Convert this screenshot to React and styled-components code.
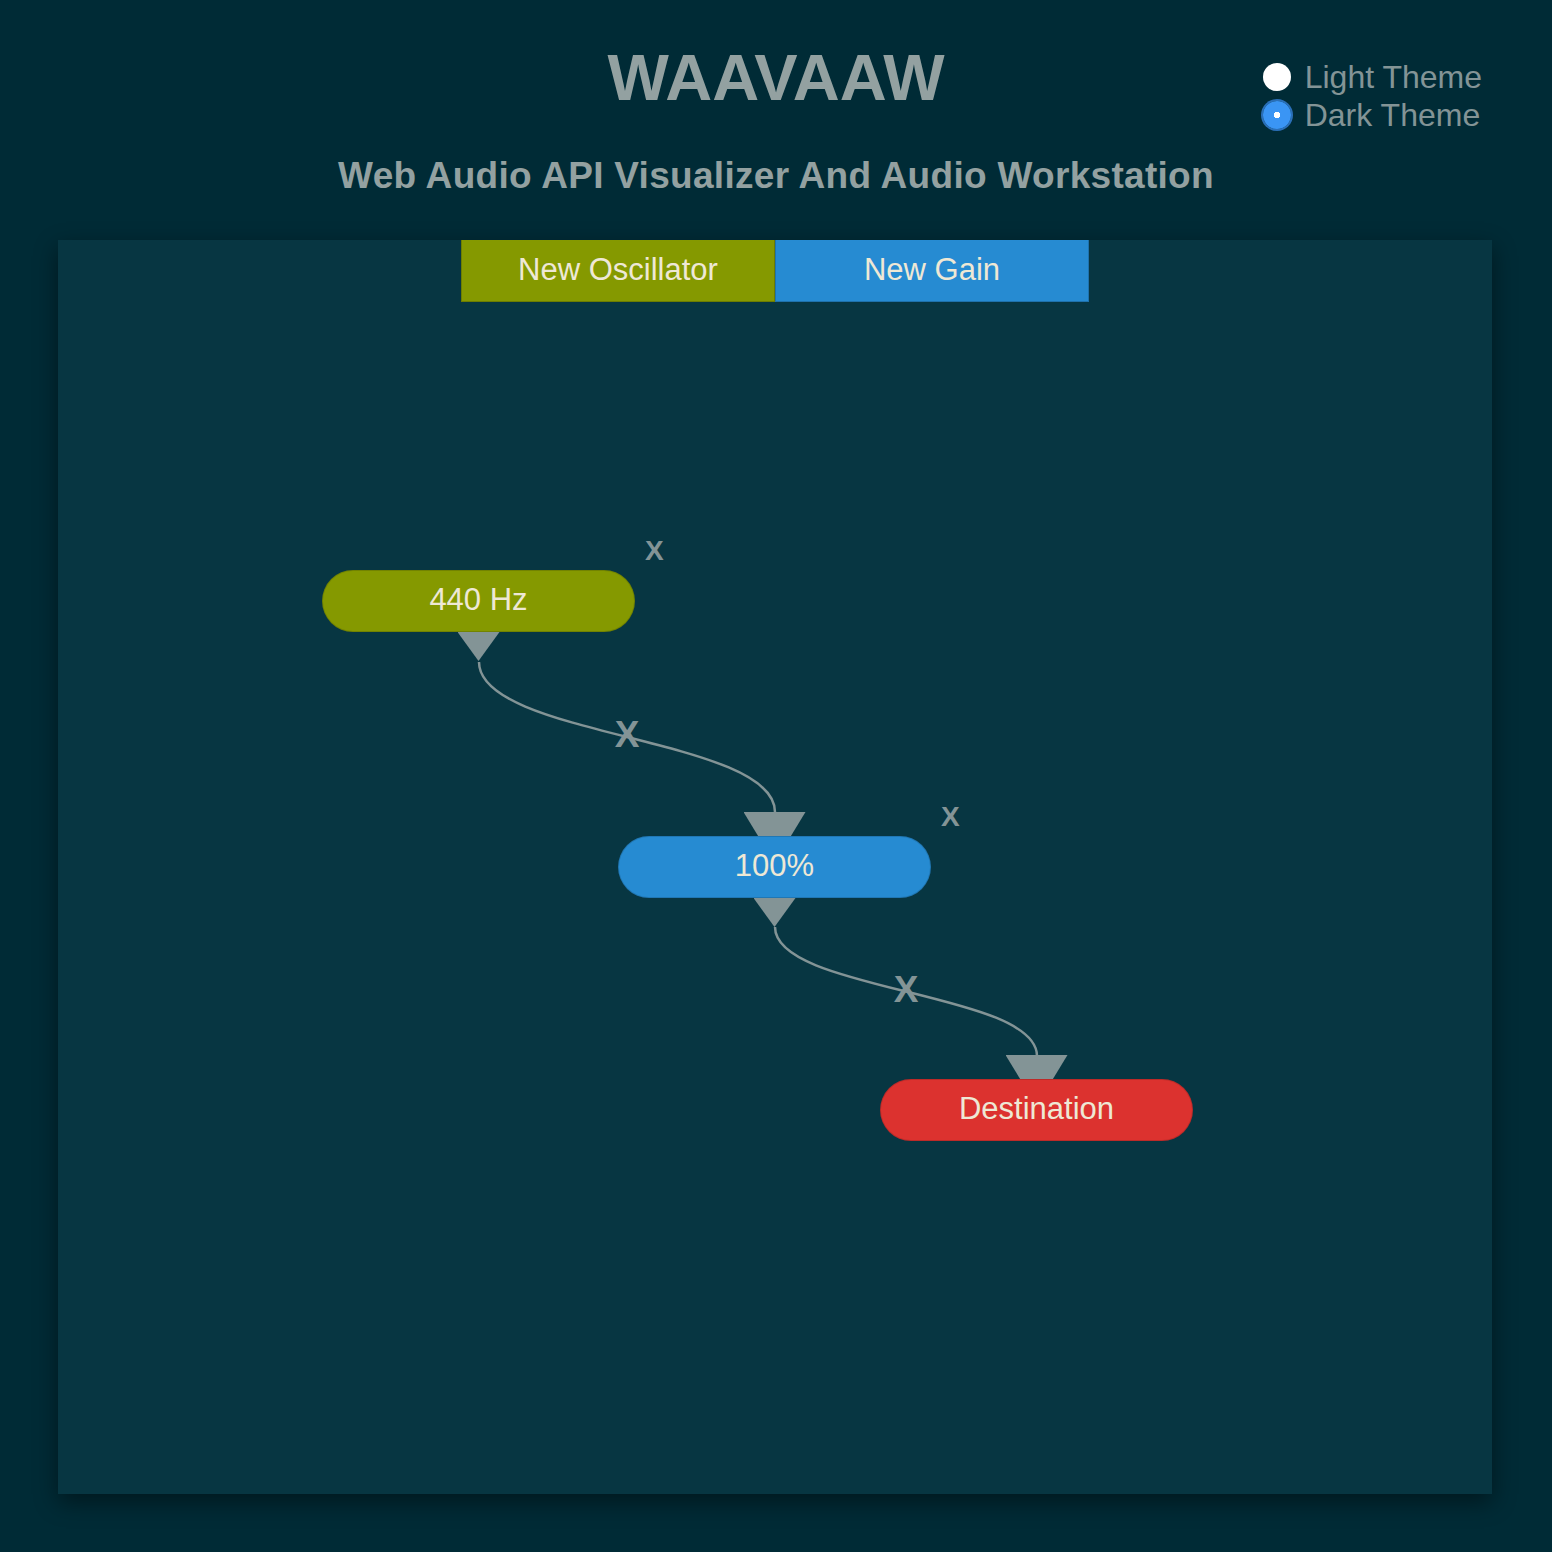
import React from 'react';
import styled, { createGlobalStyle } from 'styled-components';

const COLORS = {
  base03: '#002b36',
  base02: '#073642',
  base0: '#839496',
  base1: '#93a1a1',
  base2: '#eee8d5',
  green: '#859900',
  blue: '#268bd2',
  red: '#dc322f',
};

const GlobalStyle = createGlobalStyle`
  html, body {
    margin: 0;
    padding: 0;
    background: ${COLORS.base03};
    font-family: "Liberation Sans", Arial, Helvetica, sans-serif;
  }
`;

const Page = styled.div`
  min-height: 1552px;
  display: flex;
  flex-direction: column;
  padding-top: 45px;
  box-sizing: border-box;
`;

const Header = styled.header`
  display: grid;
  grid-template-columns: 1fr auto 1fr;
  align-items: start;
`;

const TitleBlock = styled.div`
  grid-column: 2;
  display: flex;
  flex-direction: column;
  align-items: center;
  gap: 47px;
`;

const Title = styled.h1`
  margin: 0;
  font-size: 65px;
  line-height: 1;
  font-weight: 700;
  color: ${COLORS.base1};
`;

const Subtitle = styled.h2`
  margin: 0;
  font-size: 37px;
  line-height: 1;
  letter-spacing: 0.3px;
  font-weight: 700;
  color: ${COLORS.base1};
  white-space: nowrap;
`;

const ThemePicker = styled.div`
  grid-column: 3;
  justify-self: end;
  margin: 13px 70px 0 0;
  display: flex;
  flex-direction: column;
`;

const ThemeOption = styled.label`
  display: flex;
  align-items: center;
  gap: 14px;
  font-size: 32px;
  line-height: 38px;
  color: ${COLORS.base0};
  cursor: pointer;
`;

const Radio = styled.input`
  appearance: none;
  margin: 0;
  width: 28px;
  height: 28px;
  border-radius: 50%;
  background: #fff;
  flex: none;

  &:checked {
    background: radial-gradient(circle, #fff 0 3px, #3a95f4 3.5px);
    box-shadow: 0 0 0 2px #2a6fb8;
  }
`;

const Panel = styled.main`
  width: 1434px;
  height: 1254px;
  margin: 46px 0 58px 58px;
  background: ${COLORS.base02};
  box-shadow: 0 8px 22px rgba(0, 0, 0, 0.45);
  display: flex;
  flex-direction: column;
`;

const Toolbar = styled.div`
  display: flex;
  justify-content: center;
`;

const ToolButton = styled.button`
  width: 314px;
  height: 62px;
  border: 1px solid rgba(0, 0, 0, 0.18);
  border-top: none;
  background: ${({ color }) => color};
  color: ${COLORS.base2};
  font-family: inherit;
  font-size: 31px;
  padding: 0 0 2px;
  cursor: pointer;
`;

const Canvas = styled.div`
  position: relative;
  flex: 1;
`;

const Wires = styled.svg`
  position: absolute;
  inset: 0;
  width: 100%;
  height: 100%;
  overflow: visible;
`;

const Node = styled.div`
  position: absolute;
  left: ${({ x }) => x}px;
  top: ${({ y }) => y}px;
  width: 313px;
  height: 62px;
`;

const NodeBody = styled.div`
  position: relative;
  z-index: 1;
  height: 100%;
  box-sizing: border-box;
  padding-bottom: 2px;
  border-radius: 31px;
  border: 1px solid rgba(0, 0, 0, 0.14);
  background: ${({ color }) => color};
  color: ${COLORS.base2};
  font-size: 31px;
  display: flex;
  align-items: center;
  justify-content: center;
`;

const InPort = styled.div`
  position: absolute;
  left: 50%;
  top: -24px;
  width: 62px;
  height: 51px;
  margin-left: -31px;
  background: ${COLORS.base0};
  clip-path: polygon(0 0, 100% 0, 50% 100%);
`;

const OutPort = styled.div`
  position: absolute;
  left: 50%;
  top: 100%;
  width: 42px;
  height: 29px;
  margin-left: -21px;
  background: ${COLORS.base0};
  clip-path: polygon(0 0, 100% 0, 50% 100%);
`;

const Close = styled.span`
  position: absolute;
  left: calc(100% + 10px);
  top: -33px;
  width: 18px;
  text-align: center;
  font-size: 28px;
  line-height: 1;
  font-weight: 700;
  color: ${COLORS.base0};
  cursor: pointer;
`;

const nodes = [
  { id: 'osc', label: '440 Hz', color: COLORS.green, x: 264, y: 268, input: false, output: true, removable: true },
  { id: 'gain', label: '100%', color: COLORS.blue, x: 560, y: 534, input: true, output: true, removable: true },
  { id: 'dest', label: 'Destination', color: COLORS.red, x: 822, y: 777, input: true, output: false, removable: false },
];

const edges = [
  { from: [421, 360], to: [717, 510] },
  { from: [717, 625], to: [979, 754] },
];

function Wire({ from, to }) {
  const [x1, y1] = from;
  const [x2, y2] = to;
  const my = (y1 + y2) / 2;
  const mx = (x1 + x2) / 2;
  return (
    <g>
      <path
        d={`M ${x1} ${y1} C ${x1} ${my}, ${x2} ${my}, ${x2} ${y2}`}
        fill="none"
        stroke={COLORS.base0}
        strokeWidth="2.5"
      />
      <text
        x={mx}
        y={my + 10}
        textAnchor="middle"
        fontFamily="Liberation Sans, Arial, sans-serif"
        fontWeight="700"
        fontSize="37"
        fill={COLORS.base0}
      >
        X
      </text>
    </g>
  );
}

export default function App() {
  return (
    <>
      <GlobalStyle />
      <Page>
        <Header>
          <TitleBlock>
            <Title>WAAVAAW</Title>
            <Subtitle>Web Audio API Visualizer And Audio Workstation</Subtitle>
          </TitleBlock>
          <ThemePicker>
            <ThemeOption>
              <Radio type="radio" name="theme" value="light" />
              Light Theme
            </ThemeOption>
            <ThemeOption>
              <Radio type="radio" name="theme" value="dark" defaultChecked />
              Dark Theme
            </ThemeOption>
          </ThemePicker>
        </Header>
        <Panel>
          <Toolbar>
            <ToolButton color={COLORS.green}>New Oscillator</ToolButton>
            <ToolButton color={COLORS.blue}>New Gain</ToolButton>
          </Toolbar>
          <Canvas>
            <Wires>
              {edges.map((e, i) => (
                <Wire key={i} {...e} />
              ))}
            </Wires>
            {nodes.map((n) => (
              <Node key={n.id} x={n.x} y={n.y}>
                {n.input && <InPort />}
                {n.output && <OutPort />}
                <NodeBody color={n.color}>{n.label}</NodeBody>
                {n.removable && <Close>X</Close>}
              </Node>
            ))}
          </Canvas>
        </Panel>
      </Page>
    </>
  );
}
